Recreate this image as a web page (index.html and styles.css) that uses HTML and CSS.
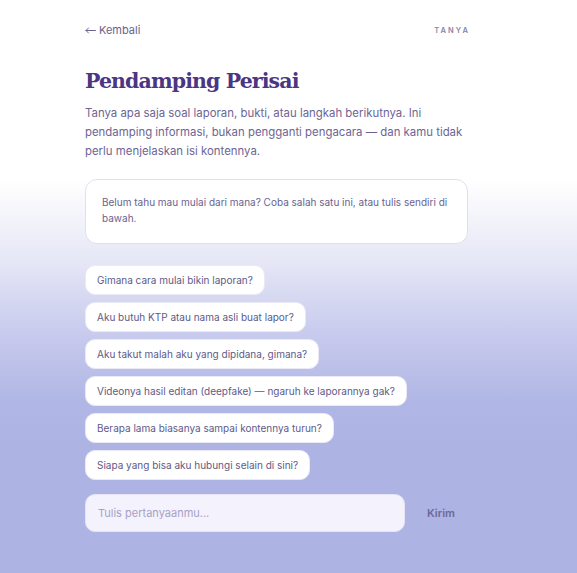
FILE: index.html
```html
<!DOCTYPE html>
<html lang="id">
<head>
<meta charset="utf-8">
<title>Pendamping Perisai</title>
<link rel="stylesheet" href="styles.css">
</head>
<body>
<main class="page">
  <header class="topbar">
    <a class="back" href="#"><svg class="arrow" width="11" height="7" viewBox="0 0 11 7" aria-hidden="true"><path d="M10.5 3.5H1M3.5 1L1 3.5L3.5 6" fill="none" stroke="currentColor" stroke-width="1" stroke-linecap="round" stroke-linejoin="round"/></svg>Kembali</a>
    <span class="tag">TANYA</span>
  </header>
  <h1 class="title">Pendamping Perisai</h1>
  <p class="lead">Tanya apa saja soal laporan, bukti, atau langkah berikutnya. Ini pendamping informasi, bukan pengganti pengacara — dan kamu tidak perlu menjelaskan isi kontennya.</p>
  <div class="card">Belum tahu mau mulai dari mana? Coba salah satu ini, atau tulis sendiri di bawah.</div>
  <ul class="chips">
    <li class="chip">Gimana cara mulai bikin laporan?</li>
    <li class="chip">Aku butuh KTP atau nama asli buat lapor?</li>
    <li class="chip">Aku takut malah aku yang dipidana, gimana?</li>
    <li class="chip">Videonya hasil editan (deepfake) — ngaruh ke laporannya gak?</li>
    <li class="chip">Berapa lama biasanya sampai kontennya turun?</li>
    <li class="chip">Siapa yang bisa aku hubungi selain di sini?</li>
  </ul>
  <form class="ask">
    <input class="field" type="text" placeholder="Tulis pertanyaanmu...">
    <button class="send" type="button">Kirim</button>
  </form>
</main>
</body>
</html>
```
FILE: styles.css
```css
html {
  min-height: 100%;
  background: linear-gradient(to bottom, #ffffff 0px, #ffffff 180px, #e6e7f6 260px, #c9ccee 330px, #b1b7e5 400px, #adb3e3 440px, #adb3e3 100%);
}
body {
  margin: 0;
  min-height: 573px;
  font-family: Inter, "Noto Sans", sans-serif;
  color: #6e6494;
}
.page {
  width: 383px;
  margin-left: 85px;
  padding-top: 22px;
}
.topbar {
  display: flex;
  justify-content: space-between;
  align-items: center;
  height: 16px;
}
.back {
  display: flex;
  align-items: center;
  gap: 3px;
  font-size: 11px;
  color: #6a6290;
  text-decoration: none;
}
.arrow {
  display: block;
  margin-top: 1px;
}
.tag {
  font-size: 7.5px;
  font-weight: 600;
  letter-spacing: 2px;
  color: #8a85a8;
  margin-right: -2px;
}
.title {
  margin: 28px 0 0;
  font-family: "DejaVu Serif", serif;
  font-weight: 700;
  font-size: 20.5px;
  line-height: 30px;
  letter-spacing: -0.9px;
  color: #4b3683;
}
.lead {
  margin: 8px -4px 0 0;
  font-size: 11.4px;
  line-height: 19px;
  color: #6e6494;
}
.card {
  margin-top: 18px;
  background: #ffffff;
  border: 1px solid #e2def0;
  border-radius: 12px;
  padding: 14px 16px 17px;
  font-size: 10px;
  line-height: 16px;
  color: #6a6290;
}
.chips {
  list-style: none;
  margin: 21px 0 0;
  padding: 0;
  display: flex;
  flex-direction: column;
  align-items: flex-start;
  gap: 7px;
}
.chip {
  background: #ffffff;
  border: 1px solid #ebe9f6;
  border-radius: 10px;
  padding: 6px 11px;
  font-size: 10px;
  line-height: 16px;
  color: #605a88;
}
.ask {
  margin-top: 14px;
  display: flex;
  align-items: center;
  gap: 22px;
}
.field {
  width: 320px;
  height: 38px;
  box-sizing: border-box;
  border: 1px solid #e6e3f5;
  border-radius: 10px;
  background: #f4f2fd;
  padding: 0 12px;
  font-family: Inter, "Noto Sans", sans-serif;
  font-size: 11px;
  color: #5e5887;
  outline: none;
}
.field::placeholder {
  color: #a7a1c6;
}
.send {
  border: 0;
  background: transparent;
  padding: 0;
  font-family: Inter, "Noto Sans", sans-serif;
  font-size: 11px;
  font-weight: 600;
  color: #6d6898;
  cursor: pointer;
}
```
